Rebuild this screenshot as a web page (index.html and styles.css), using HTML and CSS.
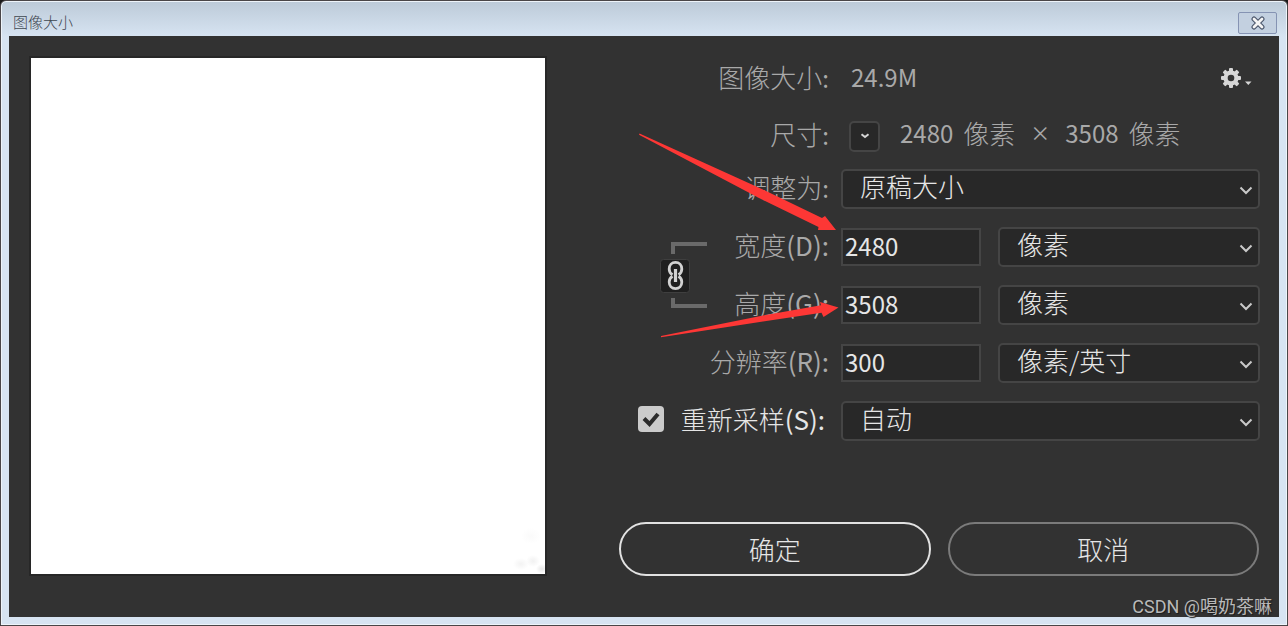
FILE: index.html
```html
<!DOCTYPE html>
<html lang="zh-CN">
<head>
<meta charset="utf-8">
<title>图像大小</title>
<link rel="stylesheet" href="styles.css">
</head>
<body>
<div class="window">
  <header class="titlebar">
    <h1 class="title">图像大小</h1>
    <button class="close" type="button" aria-label="关闭">
      <svg width="16" height="14" viewBox="0 0 16 14"><path d="M4 3l8 8M12 3l-8 8" stroke="#4b566b" stroke-width="5" stroke-linecap="round"/><path d="M4 3l8 8M12 3l-8 8" stroke="#f4f4f4" stroke-width="2.8" stroke-linecap="round"/></svg>
    </button>
  </header>
  <main class="content">
    <div class="preview"></div>
    <form class="form">
      <div class="grid">
        <span class="label">图像大小<span class="latin">:</span></span>
        <div class="line">
          <span class="latin size">24.9M</span>
          <button class="gear" type="button" aria-label="选项">
            <svg width="32" height="22" viewBox="0 0 32 22"><g fill="#d6d6d6"><g transform="translate(11 11)"><circle r="7.6"/><rect x="-2" y="-10" width="4" height="20" rx="1"/><rect x="-10" y="-2" width="20" height="4" rx="1"/><rect x="-2" y="-10" width="4" height="20" rx="1" transform="rotate(45)"/><rect x="-2" y="-10" width="4" height="20" rx="1" transform="rotate(-45)"/><circle r="3.3" fill="#323232"/></g><path d="M25 14.500h6.500l-3.200 3.500z"/></g></svg>
          </button>
        </div>

        <span class="label">尺寸<span class="latin">:</span></span>
        <div class="line">
          <button class="unit" type="button" aria-label="尺寸单位">
            <svg width="10" height="6" viewBox="0 0 10 6"><path d="M1.500 1.200L5 4l3.500-2.800" fill="none" stroke="#d6d6d6" stroke-width="2"/></svg>
          </button>
          <span class="dims"><span class="latin">2480</span><span>像素</span><span class="times">×</span><span class="latin">3508</span><span>像素</span></span>
        </div>

        <label class="label" for="fit">调整为<span class="latin">:</span></label>
        <div class="select"><select id="fit"><option>原稿大小</option></select><svg class="chev" width="14" height="9" viewBox="0 0 14 9"><path d="M1.500 1.500L7 7l5.500-5.500"/></svg></div>

        <label class="label row-width" for="w">宽度<span class="key">(D):</span></label>
        <div class="pair row-width">
          <input class="latin" id="w" type="text" value="2480">
          <div class="select"><select aria-label="宽度单位"><option>像素</option></select><svg class="chev" width="14" height="9" viewBox="0 0 14 9"><path d="M1.500 1.500L7 7l5.500-5.500"/></svg></div>
        </div>

        <label class="label row-height" for="h">高度<span class="key">(G):</span></label>
        <div class="pair row-height">
          <input class="latin" id="h" type="text" value="3508">
          <div class="select"><select aria-label="高度单位"><option>像素</option></select><svg class="chev" width="14" height="9" viewBox="0 0 14 9"><path d="M1.500 1.500L7 7l5.500-5.500"/></svg></div>
        </div>

        <label class="label" for="r">分辨率<span class="key">(R):</span></label>
        <div class="pair">
          <input class="latin" id="r" type="text" value="300">
          <div class="select"><select aria-label="分辨率单位"><option>像素/英寸</option></select><svg class="chev" width="14" height="9" viewBox="0 0 14 9"><path d="M1.500 1.500L7 7l5.500-5.500"/></svg></div>
        </div>

        <div class="check"><span class="box"><input id="resample" type="checkbox" checked><svg width="18" height="16" viewBox="0 0 18 16"><path d="M2 7.500l5.500 5.500L16 3" fill="none" stroke="#2b2b2b" stroke-width="4"/></svg></span><label class="label" for="resample">重新采样<span class="key">(S):</span></label></div>
        <div class="select"><select aria-label="重新采样"><option>自动</option></select><svg class="chev" width="14" height="9" viewBox="0 0 14 9"><path d="M1.500 1.500L7 7l5.500-5.500"/></svg></div>

        <button class="link" type="button" aria-label="约束长宽比">
          <svg width="48" height="70" viewBox="660 241 48 70">
            <path d="M673 254v-10h34M673 298v8h34" fill="none" stroke="#6a6a6a" stroke-width="4"/>
            <rect x="660.500" y="259.500" width="29" height="33" rx="3" fill="#1f1f1f" stroke="#3f3f3f"/>
            <g fill="none" stroke="#d2d2d2" stroke-width="2.800"><path d="M672.500 274.800c-2-1.200-3.300-3.300-3.300-5.800 0-3.800 2.700-6.600 6.300-6.600s6.300 2.800 6.300 6.600c0 2.500-1.300 4.600-3.300 5.800M672.500 276.200c-2 1.200-3.300 3.300-3.300 5.800 0 3.800 2.700 6.600 6.300 6.600s6.300-2.800 6.300-6.600c0-2.500-1.300-4.600-3.300-5.800"/><path d="M675.500 269v13" stroke-width="3.200"/></g>
          </svg>
        </button>
      </div>
      <div class="actions">
        <button class="btn primary" type="submit">确定</button>
        <button class="btn" type="button">取消</button>
      </div>
      <svg class="arrows" width="240" height="300" viewBox="620 56 240 300" fill="#fd3735"><path d="M639.500 133.500L765 190.500L822 218L825 216L836 230H818L818.500 227L760 198.500L639 134.800Z"/><path d="M661 336L763 315.500L821 305.300L820 302L838.500 307.500L823.500 317L821.500 312.700L763 321.500L661 337.200Z"/></svg>
    </form>
    <span class="mark">CSDN @喝奶茶嘛</span>
  </main>
</div>
</body>
</html>
```
FILE: styles.css
```css
* { box-sizing: border-box; }

body {
  margin: 0;
  background: #1a1a1a;
  color: #a9a9a9;
  font: 300 26px/40px "Noto Sans CJK SC", sans-serif;
}

button, input, select {
  margin: 0;
  padding: 0;
  border: 0;
  background: none;
  color: inherit;
  font: inherit;
}

svg { display: block; }

.latin {
  font-size: 24px;
  font-weight: 400;
}

.key { font-weight: 400; }

.window {
  display: flex;
  flex-direction: column;
  min-height: 100vh;
  padding: 0 8px 8px;
  border: 1px solid #4a4648;
  border-radius: 6px 6px 0 0;
  background: linear-gradient(#bccad8, #d7e4f2 36px);
  box-shadow: inset 0 0 0 1px #eef4fa;
}

.titlebar {
  display: flex;
  align-items: center;
  justify-content: space-between;
  height: 35px;
  padding: 8px 2px 0 4px;
}

.title {
  margin: 0 0 2px;
  color: #3f4750;
  font-size: 15px;
  font-weight: 300;
  line-height: 20px;
}

.close {
  display: grid;
  place-items: center;
  width: 39px;
  height: 22px;
  border: 1px solid #8593b3;
  border-radius: 2px;
  background: #c3d0e0;
}

.content {
  position: relative;
  display: flex;
  flex: 1;
  align-items: flex-start;
  gap: 73px;
  padding: 20px 19px 20px 20px;
  background: #323232;
}

.preview {
  flex: 0 1 518px;
  height: 520px;
  border: 2px solid #272727;
  background:
    radial-gradient(ellipse 8px 6px at 490px 506px, #f3f3f3, transparent),
    radial-gradient(ellipse 7px 6px at 502px 503px, #f1f1f1, transparent),
    radial-gradient(ellipse 6px 5px at 511px 511px, #e6e6e6, transparent),
    radial-gradient(ellipse 10px 8px at 500px 478px, #fafafa, transparent),
    #ffffff;
}

.form {
  position: relative;
  flex: 1;
}

.grid {
  display: grid;
  grid-template-columns: 210px 1fr;
  grid-template-rows: 47px 30px repeat(5, 40px);
  gap: 18px 11px;
}

.grid > * { align-self: center; }

.label {
  grid-column: 1;
  padding: 0 1px 4px 0;
  text-align: right;
  white-space: nowrap;
}

.row-width { grid-row: 4; }

.row-height { grid-row: 5; }

.line {
  display: flex;
  align-items: center;
  justify-content: space-between;
}

.size { padding: 0 0 6px 10px; }

.gear {
  margin: 0 8px 4px 0;
}

.unit {
  display: grid;
  place-items: center;
  width: 31px;
  height: 31px;
  margin-left: 8px;
  border: 2px solid #454545;
  border-radius: 5px;
  background: #282828;
}

.dims {
  display: flex;
  flex: 1;
  gap: 10px;
  margin-left: 20px;
  padding-bottom: 6px;
  white-space: nowrap;
}

.times {
  padding: 0 5px;
  font-size: 20px;
  font-weight: 400;
}

.select {
  position: relative;
  display: flex;
  flex: 1;
  height: 40px;
  border: 2px solid #454545;
  border-radius: 5px;
  background: #282828;
}

select {
  flex: 1;
  height: 40px;
  margin-top: -5px;
  padding: 0 40px 0 17px;
  appearance: none;
  color: #e6e6e6;
}

.chev {
  position: absolute;
  top: 15px;
  right: 5px;
  fill: none;
  stroke: #c9c9c9;
  stroke-width: 2;
  pointer-events: none;
}

.pair {
  display: flex;
  grid-column: 2;
  align-items: center;
  gap: 17px;
}

input[type="text"] {
  width: 140px;
  height: 38px;
  padding: 0 2px 2px;
  border: 2px solid #454545;
  background: #282828;
  color: #e6e6e6;
}

.check {
  display: flex;
  grid-column: 1;
  align-items: center;
  justify-content: flex-end;
  gap: 17px;
  padding-right: 4px;
  color: #e6e6e6;
}

.box {
  display: grid;
  place-items: center;
  margin-bottom: 4px;
}

.box > * { grid-area: 1 / 1; }

.box svg { pointer-events: none; }

.box input {
  width: 26px;
  height: 26px;
  border-radius: 4px;
  appearance: none;
  background: #cbcbcb;
}

.link {
  grid-area: 4 / 1 / 6 / 2;
  justify-self: start;
  margin-left: 40px;
}

.actions {
  display: flex;
  gap: 17px;
  margin: 81px 1px 0 -1px;
}

.btn {
  flex: 1;
  height: 54px;
  border: 2px solid #7b7b7b;
  border-radius: 27px;
  color: #e6e6e6;
}

.primary { border-color: #e2e2e2; }

.arrows {
  position: absolute;
  top: 0;
  left: 0;
  pointer-events: none;
}

.mark {
  position: absolute;
  right: 7px;
  bottom: 0;
  color: #b9b9b9;
  font: 18px/20px Roboto, "Noto Sans CJK SC", sans-serif;
  text-shadow: 1px 1px 1px #1c1c1c;
}
```
